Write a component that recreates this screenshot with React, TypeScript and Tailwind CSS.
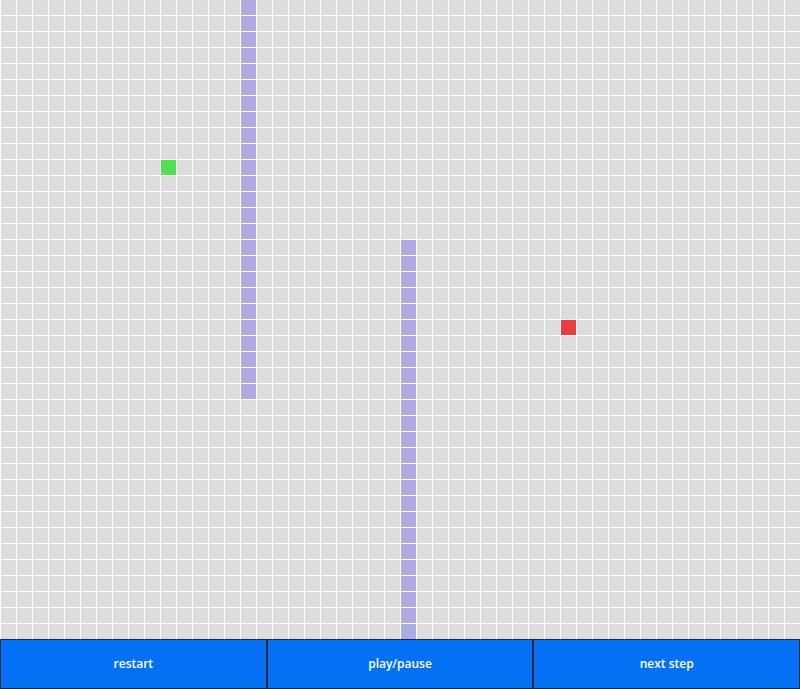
const COLS = 50;
const ROWS = 40;

const isWall = (r: number, c: number) =>
  (c === 15 && r <= 24) || (c === 25 && r >= 15);

const cellClass = (r: number, c: number) => {
  if (r === 10 && c === 10) return 'bg-[#52e052]';
  if (r === 20 && c === 35) return 'bg-[#ec3c3c]';
  if (isWall(r, c)) return 'bg-[#adabdf]';
  return 'bg-[#dcdcdc]';
};

const buttons = ['restart', 'play/pause', 'next step'];

const App = () => (
  <div className="w-[800px] h-[690px] bg-white overflow-hidden flex flex-col">
    <div className="grid grid-cols-[repeat(50,16px)] grid-rows-[repeat(40,16px)]">
      {Array.from({ length: ROWS * COLS }).map((_, i) => {
        const r = Math.floor(i / COLS);
        const c = i % COLS;
        return (
          <div key={i} className={`w-4 h-4 box-border border-l border-b border-white ${cellClass(r, c)}`} />
        );
      })}
    </div>
    <div className="flex -mt-px">
      {buttons.map((label) => (
        <button
          key={label}
          className="flex-1 h-[50px] bg-[#0471f5] border border-[#1b2a40] text-white text-[12px] font-semibold flex items-center justify-center"
          style={{ fontFamily: "'Open Sans', 'DejaVu Sans', sans-serif" }}
        >
          {label}
        </button>
      ))}
    </div>
  </div>
);

export default App;
